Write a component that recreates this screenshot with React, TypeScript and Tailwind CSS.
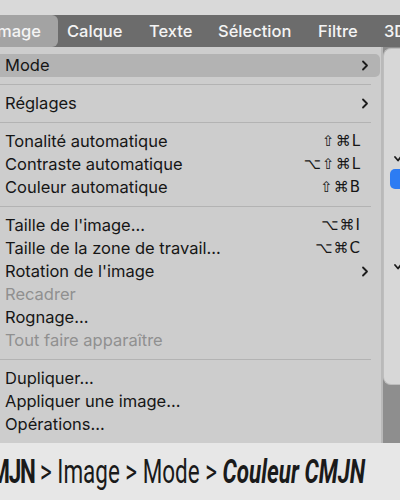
import { ReactNode } from 'react';

type Item =
  | { kind: 'sep' }
  | { kind: 'row'; label: string; shortcut?: string; sub?: boolean; disabled?: boolean; active?: boolean };

const items: Item[] = [
  { kind: 'row', label: 'Mode', sub: true, active: true },
  { kind: 'sep' },
  { kind: 'row', label: 'Réglages', sub: true },
  { kind: 'sep' },
  { kind: 'row', label: 'Tonalité automatique', shortcut: '⇧⌘L' },
  { kind: 'row', label: 'Contraste automatique', shortcut: '⌥⇧⌘L' },
  { kind: 'row', label: 'Couleur automatique', shortcut: '⇧⌘B' },
  { kind: 'sep' },
  { kind: 'row', label: "Taille de l'image...", shortcut: '⌥⌘I' },
  { kind: 'row', label: 'Taille de la zone de travail...', shortcut: '⌥⌘C' },
  { kind: 'row', label: "Rotation de l'image", sub: true },
  { kind: 'row', label: 'Recadrer', disabled: true },
  { kind: 'row', label: 'Rognage...' },
  { kind: 'row', label: 'Tout faire apparaître', disabled: true },
  { kind: 'sep' },
  { kind: 'row', label: 'Dupliquer...' },
  { kind: 'row', label: 'Appliquer une image...' },
  { kind: 'row', label: 'Opérations...' },
];

function Chevron() {
  return (
    <svg width="8" height="11" viewBox="0 0 8 11" fill="none">
      <path d="M2 1.5 L6 5.5 L2 9.5" stroke="#1c1c1c" strokeWidth="1.8" strokeLinecap="round" strokeLinejoin="round" />
    </svg>
  );
}

function Check() {
  return (
    <svg width="10" height="10" viewBox="0 0 10 10" fill="none">
      <path d="M1 4 L4 7.5 L9 1" stroke="#1c1c1c" strokeWidth="1.8" strokeLinecap="round" strokeLinejoin="round" />
    </svg>
  );
}

function MenuBarItem({ children, w }: { children: ReactNode; w: string }) {
  return <span className={`${w} shrink-0 text-[16.5px] font-medium text-[#f4f4f4]`}>{children}</span>;
}

export default function App() {
  return (
    <div className="flex h-[500px] w-[400px] flex-col overflow-hidden bg-[#8e8e8e] font-['Inter','DejaVu_Sans',sans-serif]">
      <div className="h-[15px] bg-[#d9d9d9]" />

      <div className="flex h-[32px] items-center bg-[#6c6c6c]">
        <div className="-ml-[14px] flex h-full w-[72px] shrink-0 items-center justify-end rounded-r-[6px] bg-[#a3a3a3] pr-[17px]">
          <span className="text-[16.5px] font-medium text-[#f4f4f4]">Image</span>
        </div>
        <span className="w-[9px] shrink-0" />
        <MenuBarItem w="w-[82px]">Calque</MenuBarItem>
        <MenuBarItem w="w-[69px]">Texte</MenuBarItem>
        <MenuBarItem w="w-[100px]">Sélection</MenuBarItem>
        <MenuBarItem w="w-[66px]">Filtre</MenuBarItem>
        <MenuBarItem w="w-[30px]">3D</MenuBarItem>
      </div>

      <div className="flex h-[396px] items-start">
        <div className="h-full w-[383px] shrink-0 border-r-2 border-[#b9b9b9] bg-[#cdcdcd] pt-[7px] pr-[1px]">
          {items.map((it, i) =>
            it.kind === 'sep' ? (
              <div key={i} className="flex h-[15px] items-center pr-[9px]">
                <div className="h-px w-full bg-[#b3b3b3]" />
              </div>
            ) : (
              <div
                key={i}
                className={`flex h-[23px] items-center justify-between pl-[5px] pr-[11px] text-[16.5px] ${
                  it.active ? 'rounded-r-[5px] bg-[#b3b3b3]' : ''
                } ${it.disabled ? 'text-[#909090]' : 'text-[#161616]'}`}
              >
                <span>{it.label}</span>
                {it.shortcut && (
                  <span className="pr-[8px] font-['DejaVu_Sans',sans-serif] text-[15px] tracking-[1px]">{it.shortcut}</span>
                )}
                {it.sub && <Chevron />}
              </div>
            )
          )}
        </div>

        <div className="mt-[1px] flex h-[337px] flex-1 flex-col rounded-l-[8px] border border-r-0 border-[#bdbdbd] bg-[#d7d7d7]">
          <div className="h-[104px]" />
          <div className="pl-[10px]">
            <Check />
          </div>
          <div className="mt-[6px] ml-[6px] h-[20px] rounded-l-[5px] bg-[#2d7cf3]" />
          <div className="mt-[72px] pl-[10px]">
            <Check />
          </div>
        </div>
      </div>

      <div className="flex flex-1 items-center overflow-hidden bg-[#e7e7e7]">
        <div className="-ml-[23px] origin-left scale-x-[0.66] whitespace-pre font-['Roboto',sans-serif] text-[34px] text-[#1a1a1a]">
          <span className="font-bold tracking-[-2px]">CMJN</span>
          <span>{' > Image > Mode > '}</span>
          <span className="font-bold italic">Couleur CMJN</span>
        </div>
      </div>
    </div>
  );
}
